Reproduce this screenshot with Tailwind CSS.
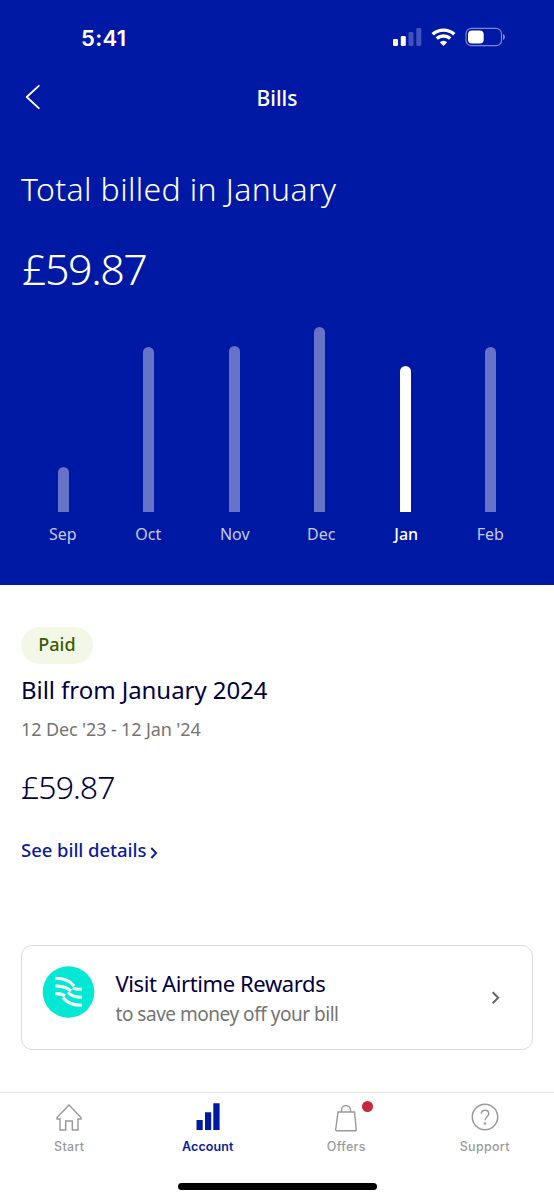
<!DOCTYPE html>
<html lang="en">
<head>
<meta charset="utf-8">
<title>Bills</title>
<script src="https://cdn.jsdelivr.net/npm/@tailwindcss/browser@4"></script>
</head>
<body class="bg-white">
<main class="w-[554px] h-[1200px] flex flex-col overflow-hidden bg-white font-['Noto_Sans',sans-serif] whitespace-nowrap">
  <header class="h-[585px] shrink-0 flex flex-col bg-[#0019a5] text-white">
    <div class="h-[74px] shrink-0 flex items-center justify-between pl-[81px] pr-[48px] font-['Inter',sans-serif]">
      <span class="pt-px text-[22px] font-semibold leading-6 tracking-[0.3px]">5:41</span>
      <div class="flex items-center">
        <svg class="w-[30px] h-[20px]" viewBox="0 0 30 20" fill="#fff"><rect x="0" y="12" width="5" height="7" rx="1.2"/><rect x="7.800" y="9" width="5" height="10" rx="1.2"/><rect x="15.500" y="5" width="5" height="14" rx="1.200" opacity=".25"/><rect x="23.300" y="1" width="5" height="18" rx="1.200" opacity=".25"/></svg>
        <svg class="ml-[8px] w-[26px] h-[20px]" viewBox="0 0 26 20" fill="none" stroke="#fff" stroke-width="3.400"><path d="M1.700 7.300a16 16 0 0 1 21.600 0"/><path d="M5.700 11.600a10 10 0 0 1 13.600 0"/><path d="M8.800 15.300a5.300 5.300 0 0 1 7.400 0L12.500 18.900Z" fill="#fff" stroke="none"/></svg>
        <svg class="ml-[8px] w-[41px] h-[20px]" viewBox="0 0 41 20" fill="none"><rect x="1" y="1.300" width="35.500" height="17.400" rx="5.500" stroke="#7c87d0" stroke-width="1.200"/><rect x="3" y="3.500" width="15.700" height="13" rx="4" fill="#fff"/><path d="M38 7v6c2.600-.8 2.600-5.200 0-6Z" fill="#7c87d0"/></svg>
      </div>
    </div>
    <div class="h-[48px] shrink-0 grid grid-cols-3 items-center px-[22px]">
      <svg class="w-[22px] h-[26px] -mt-[2px]" viewBox="0 0 22 26" fill="none" stroke="#fff" stroke-width="1.800" stroke-linecap="round" stroke-linejoin="round"><path d="M16.800 1.800 4.700 13l12.100 11.200"/></svg>
      <h1 class="text-center text-[21px] leading-6 font-medium">Bills</h1>
    </div>
    <h2 class="mt-[47px] pl-[21px] text-[32px] leading-10 font-light tracking-[0.36px]">Total billed in January</h2>
    <p class="mt-8 pl-[22px] text-[43px] leading-14 font-light tracking-[-1.5px]">£59.87</p>
    <div class="ml-[20.5px] w-[513px] grid grid-cols-6 h-[215px] items-end justify-items-center">
      <div class="w-[11px] rounded-t-full bg-[#6673c9]" style="height:45px"></div>
      <div class="w-[11px] rounded-t-full bg-[#6673c9]" style="height:165px"></div>
      <div class="w-[11px] rounded-t-full bg-[#6673c9]" style="height:166px"></div>
      <div class="w-[11px] rounded-t-full bg-[#6673c9]" style="height:185px"></div>
      <div class="w-[11px] rounded-t-full bg-white" style="height:146px"></div>
      <div class="w-[11px] rounded-t-full bg-[#6673c9]" style="height:165px"></div>
    </div>
    <div class="ml-[20px] mt-[12px] w-[513px] grid grid-cols-6 text-center text-[16px] leading-5 text-[#c4caec]">
      <span>Sep</span><span>Oct</span><span class="pl-[2px]">Nov</span><span class="pl-[4px]">Dec</span><span class="pl-[3px] text-white font-medium">Jan</span><span>Feb</span>
    </div>
  </header>
  <section class="pl-[21px] flex flex-col items-start">
    <span class="mt-[42px] h-[37px] w-[72px] rounded-full bg-[#f3f8e6] text-center text-[18px] leading-[35px] font-medium text-[#3c5a00]">Paid</span>
    <h3 class="mt-[10px] text-[24px] leading-8 tracking-[-0.06px] text-[#02003f]">Bill from January 2024</h3>
    <p class="mt-[11px] text-[18px] leading-6 tracking-[-0.12px] text-[#747474]">12 Dec '23 - 12 Jan '24</p>
    <p class="mt-[26px] text-[32px] leading-10 font-light tracking-[-0.95px] text-[#02003f]">£59.87</p>
    <a class="mt-[31px] flex items-center text-[18.5px] leading-6 font-medium tracking-[-0.05px] text-[#0b1a9e]"><span>See bill details</span>
      <svg class="ml-1 mt-[6px] w-[8px] h-[12px]" viewBox="0 0 8 12" fill="none" stroke="#0b1a9e" stroke-width="1.800"><path d="m1.300 1 4.900 5-4.900 5"/></svg></a>
  </section>
  <section class="mt-[83px] ml-[20.5px] w-[512.5px] h-[105px] shrink-0 flex items-center rounded-[11px] border-[1.5px] border-[#dcdcdc] pl-[20px] pr-[32px]">
    <svg class="mb-[11px] w-[54px] h-[54px] shrink-0" viewBox="0.500 0 54 54"><circle cx="27" cy="27" r="25.800" fill="#03e8d4"/><g fill="none" stroke="#fff" stroke-width="3.100"><path d="M14 13.300c9 0 14.500 2.500 18.500 7.700"/><path d="M31.500 22.800c2 1.200 4.500 1.500 8.800 1.500"/><path d="M14 21c7.500 0 11.500 1.500 15.500 5"/><path d="M26.500 27.500c3.500 3.500 7 4.800 13.800 4.800"/><path d="M14 28.600c4 0 6.500.4 9.500 2.200"/><path d="M21.500 32.500c4 5.500 9.500 7.800 18.800 7.800"/></g></svg>
    <div class="ml-[20px] mb-[2px] grow">
      <h4 class="text-[22px] leading-[30px] tracking-[-0.38px] text-[#02003f]">Visit Airtime Rewards</h4>
      <p class="mt-1 text-[19px] leading-6 tracking-[-0.48px] text-[#747474]">to save money off your bill</p>
    </div>
    <svg class="w-[9px] h-[14px] shrink-0" viewBox="0 0 9 14" fill="none" stroke="#666" stroke-width="2"><path d="m1.700 1.200 5.500 5.500-5.500 5.500"/></svg>
  </section>
  <nav class="mt-[42px] h-[108px] shrink-0 border-t-[1.500px] border-[#e2e2e2] flex flex-col items-center font-['Inter',sans-serif]">
    <div class="w-full grid grid-cols-4 pt-[10px] text-center text-[12.5px] leading-4 font-medium tracking-[0.3px] text-[#9a9a9a]">
      <div class="flex flex-col items-center gap-[6px]">
        <svg class="w-[30px] h-[30px]" viewBox="0 0 30 30" fill="none" stroke="#999" stroke-width="1.400"><path d="M15 2 3 14.500V16h3V27H11.700v-9h6.600v9H24V16h3V14.500Z"/></svg>
        <span>Start</span>
      </div>
      <div class="flex flex-col items-center gap-[6px] text-[#0b1a9e]">
        <svg class="w-[30px] h-[30px]" viewBox="0 0 30 30" fill="#0019a5"><path d="M3.500 17h6.200V27H3.500ZM12 9.200h6.200V27H12ZM20.300.3h6.300V27h-6.300Z"/></svg>
        <span class="font-semibold tracking-[0.1px]">Account</span>
      </div>
      <div class="flex flex-col items-center gap-[6px]">
        <div class="relative">
          <svg class="w-[30px] h-[30px]" viewBox="0 0 30 30" fill="none" stroke="#999" stroke-width="1.400"><path d="M7 9h16.500L25.200 26.500q.1 1.300-1.300 1.300H6q-1.400 0-1.300-1.300ZM10.500 9V7a4.500 4.500 0 0 1 9 0v2"/></svg>
          <span class="absolute left-[31px] -top-[2.5px] size-[11px] rounded-full bg-[#c8283c]"></span>
        </div>
        <span>Offers</span>
      </div>
      <div class="flex flex-col items-center gap-[6px]">
        <svg class="w-[30px] h-[30px]" viewBox="0 0 30 30" fill="none" stroke="#999" stroke-width="1.500"><circle cx="15" cy="14" r="12.700"/><path d="M11.300 10.800c.3-4.600 7.400-4.600 7.400 0 0 2.900-3.600 3-3.600 6.500"/><circle cx="15" cy="20.500" r=".6" fill="#999"/></svg>
        <span>Support</span>
      </div>
    </div>
    <div class="mt-[28px] w-[199px] h-[6.500px] rounded-full bg-black"></div>
  </nav>
</main>
</body>
</html>
